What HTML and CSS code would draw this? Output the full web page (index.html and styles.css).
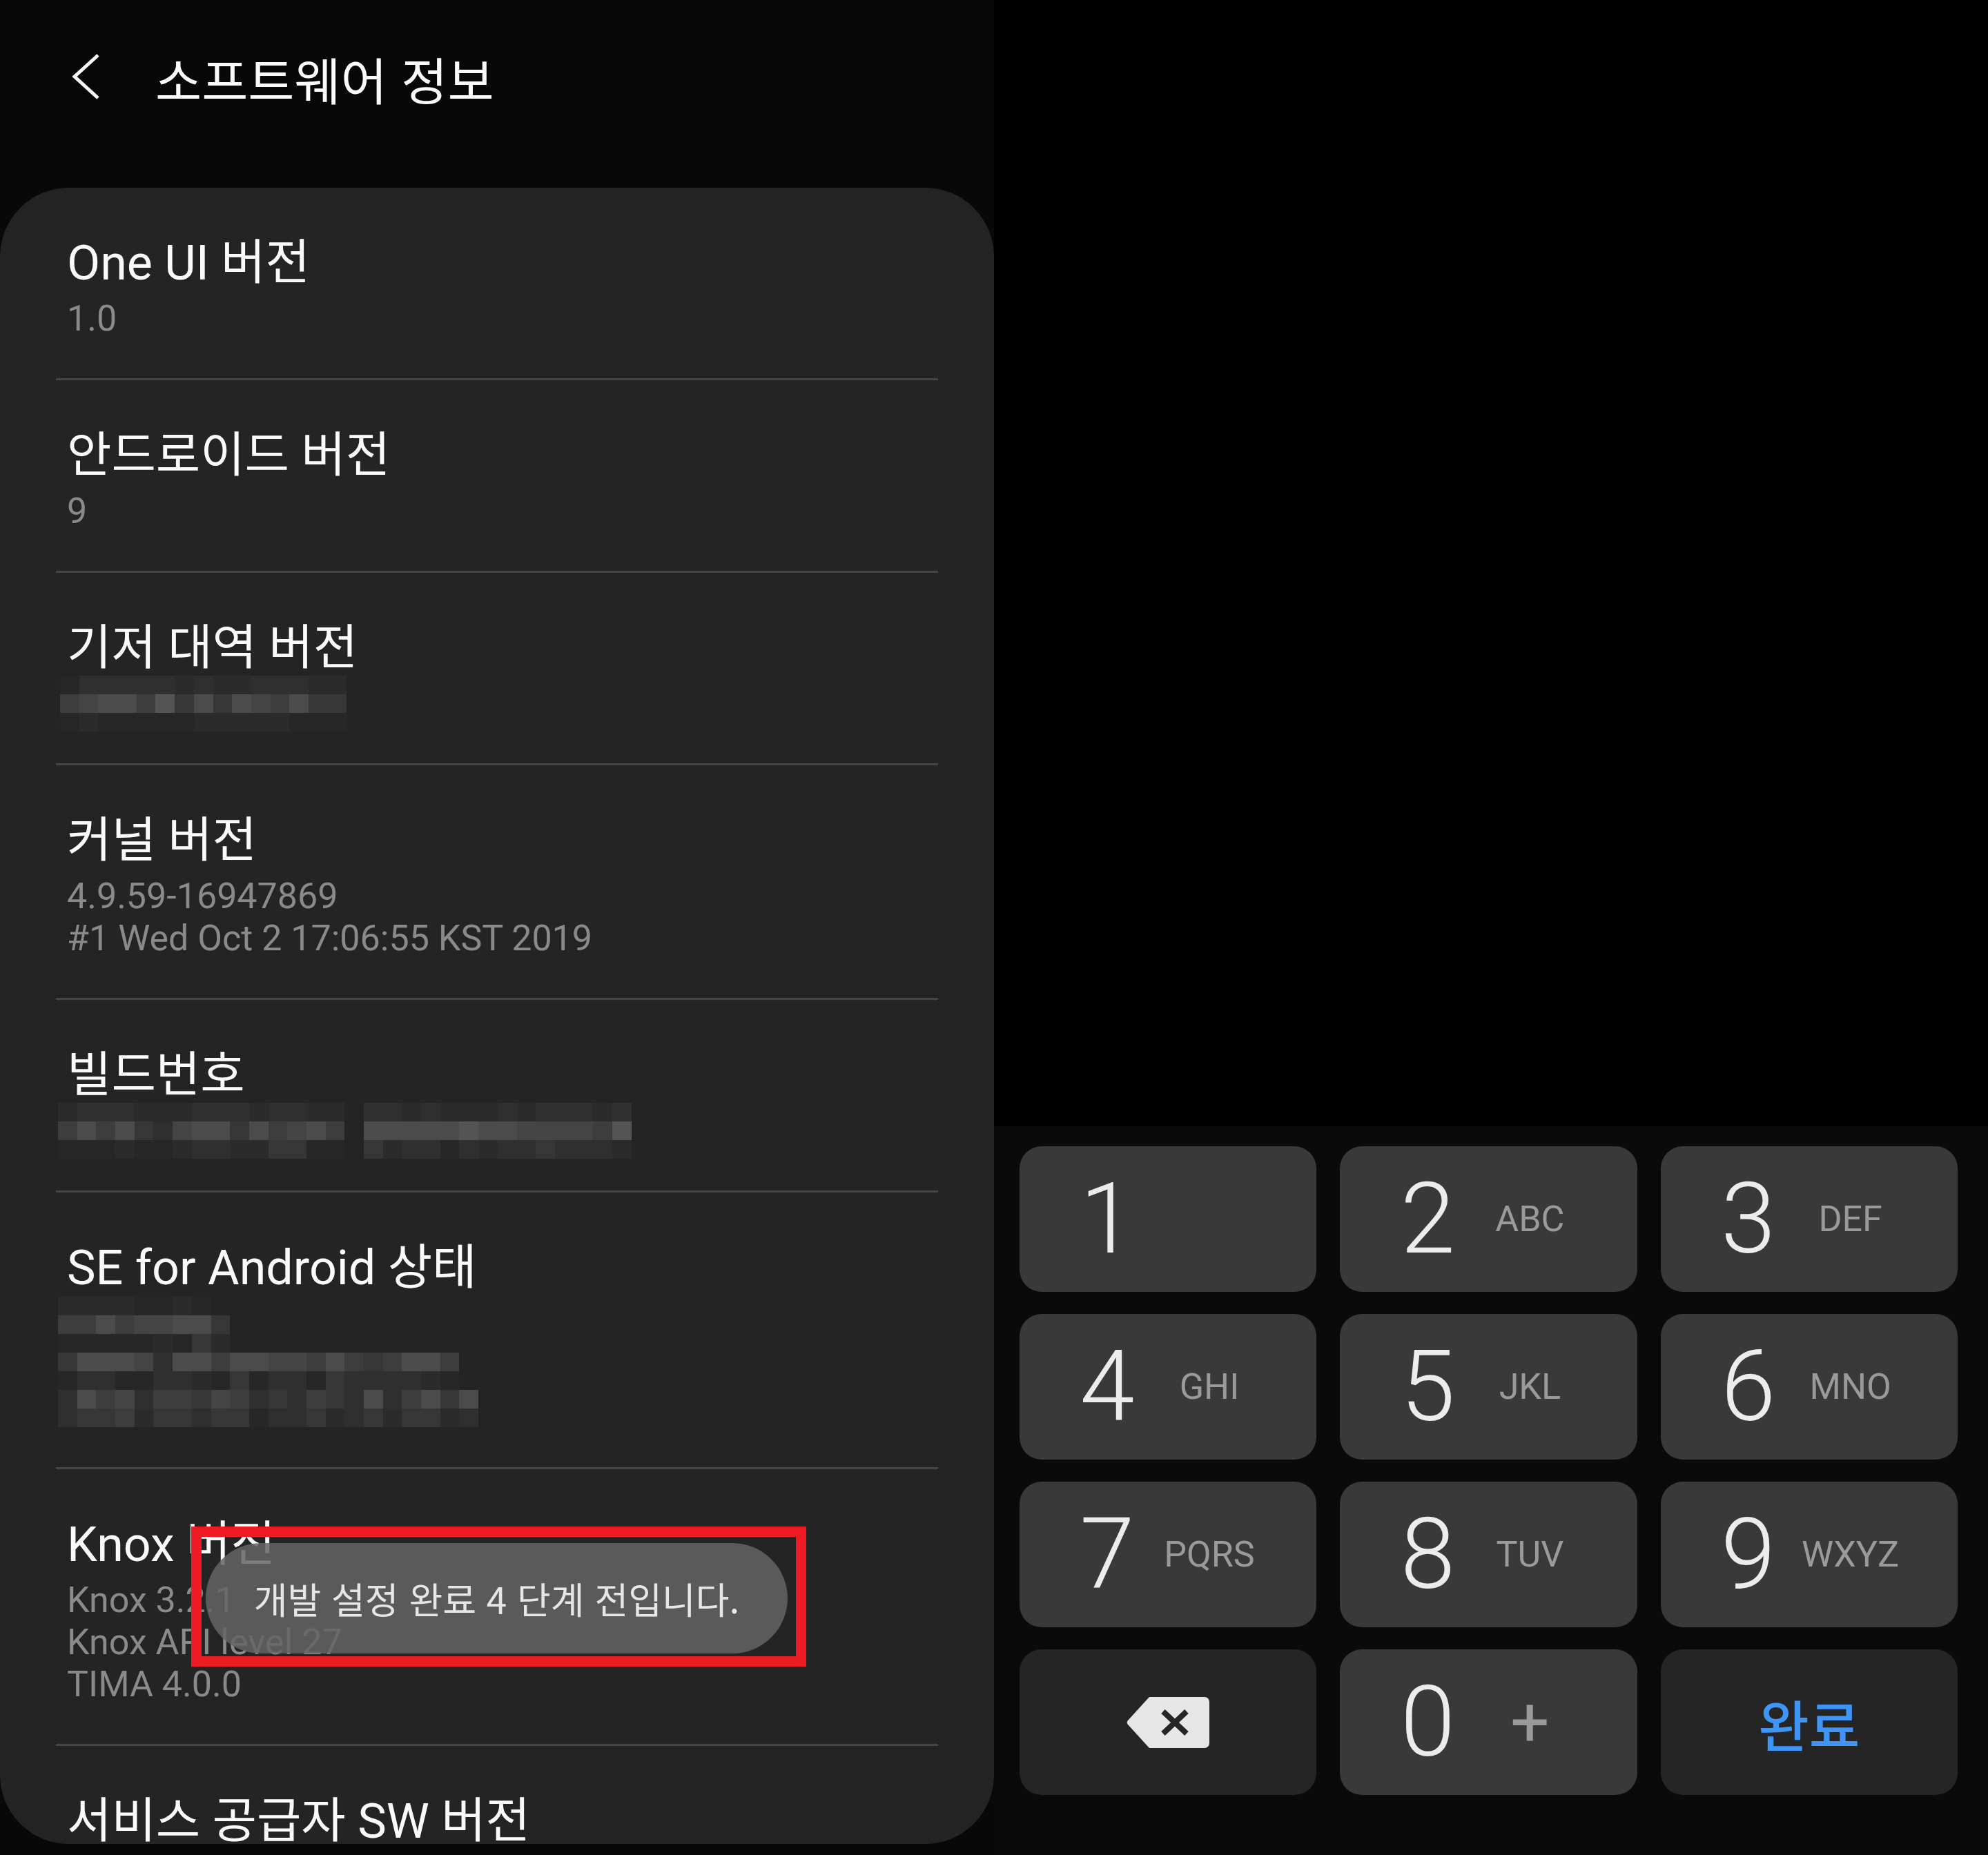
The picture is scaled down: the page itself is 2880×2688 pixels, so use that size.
FILE: index.html
```html
<!DOCTYPE html>
<html lang="ko">
<head>
<meta charset="UTF-8">
<meta name="viewport" content="width=device-width, initial-scale=1.0">
<title>소프트웨어 정보</title>
<link rel="stylesheet" href="styles.css">
</head>
<body>

<div class="settings">
    <!-- Header -->
    <div class="header">
        <svg class="back-icon" width="48" height="72" viewBox="0 0 48 72">
            <polyline points="42,3 8,34 42,65" fill="none" stroke="#fafafa" stroke-width="5" stroke-linejoin="miter"/>
        </svg>
        <h1 class="header-title">소프트웨어 정보</h1>
    </div>

    <!-- Info list -->
    <div class="card">
        <div class="row">
            <div class="row-title">One UI 버전</div>
            <div class="row-sub">1.0</div>
        </div>
        <div class="row">
            <div class="row-title">안드로이드 버전</div>
            <div class="row-sub">9</div>
        </div>
        <div class="row">
            <div class="row-title">기저 대역 버전</div>
            <div class="mosaic" data-rows="022222121122211 456647363654633 010000011111000"></div>
        </div>
        <div class="row">
            <div class="row-title">커널 버전</div>
            <div class="row-sub">4.9.59-16947869<br>#1 Wed Oct 2 17:06:55 KST 2019</div>
        </div>
        <div class="row">
            <div class="row-title">빌드번호</div>
            <div class="mosaic build" data-rows="122211122212211.22121112122212 464632566364564.66666766555547 000100122113300.31220212232221"></div>
        </div>
        <div class="row">
            <div class="row-title">SE for Android 상태</div>
            <div class="mosaic tall" data-rows="11110010 446455663 000001031 366652664665546434664 022002210302203222210 2645244354232432624636 2334133233022312313312"></div>
        </div>
        <div class="row">
            <div class="row-title">Knox 버전</div>
            <div class="row-sub">Knox 3.2.1<br>Knox API level 27<br>TIMA 4.0.0</div>
        </div>
        <div class="row row-last">
            <div class="row-title">서비스 공급자 SW 버전</div>
        </div>
    </div>

    <!-- Toast + highlight box -->
    <div class="toast">개발 설정 완료 4 단계 전입니다.</div>
    <div class="highlight"></div>
</div>

<div class="side">
    <div class="blank"></div>

    <!-- Dial pad -->
    <div class="keypad">
        <div class="key"><span class="digit">1</span></div>
        <div class="key"><span class="digit">2</span><span class="letters">ABC</span></div>
        <div class="key"><span class="digit">3</span><span class="letters">DEF</span></div>
        <div class="key"><span class="digit">4</span><span class="letters">GHI</span></div>
        <div class="key"><span class="digit">5</span><span class="letters">JKL</span></div>
        <div class="key"><span class="digit">6</span><span class="letters">MNO</span></div>
        <div class="key"><span class="digit">7</span><span class="letters">PQRS</span></div>
        <div class="key"><span class="digit">8</span><span class="letters">TUV</span></div>
        <div class="key"><span class="digit">9</span><span class="letters">WXYZ</span></div>
        <div class="key key-dark key-center">
            <svg width="120" height="74" viewBox="0 0 120 74">
                <path d="M33 0 H113 A7 7 0 0 1 120 7 V67 A7 7 0 0 1 113 74 H33 L2 40 A4.5 4.5 0 0 1 2 34 Z" fill="#e6e6e6"/>
                <path d="M53 21 L87 53 M87 21 L53 53" stroke="#262626" stroke-width="8"/>
            </svg>
        </div>
        <div class="key"><span class="digit">0</span><span class="letters plus">+</span></div>
        <div class="key key-dark key-center"><span class="done">완료</span></div>
    </div>
</div>

<script>
    // Build the blurred (mosaic) placeholders from their row strings
    document.querySelectorAll('.mosaic').forEach(function (mosaic) {
        mosaic.dataset.rows.split(' ').forEach(function (line) {
            const row = document.createElement('div');
            row.className = 'mosaic-row';
            for (const ch of line) {
                const cell = document.createElement('i');
                cell.className = ch === '.' ? 'gap' : 'c' + ch;
                row.appendChild(cell);
            }
            mosaic.appendChild(row);
        });
    });
</script>

</body>
</html>
```

FILE: styles.css
```css
/* Base */
body {
    margin: 0;
    width: 2880px;
    height: 2688px;
    overflow: hidden;
    display: flex;
    background-color: #000;
    font-family: Roboto, "Noto Sans CJK KR", sans-serif;
}

/* Left: settings screen */
.settings {
    position: relative;
    width: 1440px;
    background-color: #080808;
}

.header {
    display: flex;
    align-items: center;
    height: 226px;
    margin-bottom: 46px;
    padding-left: 100px;
}

.back-icon {
    display: block;
}

.header-title {
    margin: 0 0 0 77px;
    font-size: 73px;
    font-weight: 400;
    color: #fafafa;
    font-family: "Noto Sans CJK KR", sans-serif;
}

.card {
    height: 2400px;
    box-sizing: border-box;
    background-color: #242424;
    border-radius: 100px;
}

.row {
    margin: 0 81px;
    padding: 69px 16px 56px;
    border-bottom: 3px solid #454545;
}

.row-title {
    font-size: 70px;
    line-height: 80px;
    color: #fafafa;
}

.row-sub {
    margin-top: 10px;
    font-size: 52px;
    line-height: 61px;
    color: #8a8a8a;
}

/* Last row sits right on the card's bottom edge */
.row-last {
    padding: 79px 16px 0;
    border-bottom: none;
}
.row-last .row-title {
    line-height: 60px;
}

/* Mosaic placeholders */
.mosaic {
    margin: 0 0 -10px -10px;
}
.mosaic.build {
    margin-left: -13px;
}
.mosaic.tall {
    margin: 2px 0 2px -13px;
}

.mosaic-row {
    display: flex;
    height: 27px;
}

.mosaic-row i {
    width: 27.7px;
    height: 27px;
}

.c0 { background-color: #272727; }
.c1 { background-color: #2b2b2b; }
.c2 { background-color: #2f2f2f; }
.c3 { background-color: #363636; }
.c4 { background-color: #3d3d3d; }
.c5 { background-color: #444444; }
.c6 { background-color: #4b4b4b; }
.c7 { background-color: #545454; }

/* Toast */
.toast {
    position: absolute;
    left: 298px;
    top: 2236px;
    width: 843px;
    height: 160px;
    border-radius: 80px;
    background-color: rgba(100, 100, 100, 0.85);
    color: #e6e6e6;
    font-family: "Noto Sans CJK KR", sans-serif;
    font-size: 53px;
    line-height: 160px;
    text-align: center;
}

.highlight {
    position: absolute;
    left: 277px;
    top: 2212px;
    width: 891px;
    height: 203px;
    box-sizing: border-box;
    border: 15px solid #ed1c24;
}

/* Right: dialer side */
.side {
    flex: 1;
    display: flex;
    flex-direction: column;
}

.blank {
    height: 1632px;
    background-color: #000;
}

.keypad {
    flex: 1;
    display: grid;
    grid-template-columns: repeat(3, 1fr);
    grid-template-rows: repeat(4, 211px);
    gap: 32px 34px;
    padding: 29px 44px 0 37px;
    background-color: #0a0a0a;
}

.key {
    display: flex;
    align-items: center;
    padding-left: 72px;
    background-color: #393939;
    border-radius: 32px;
}

.key-dark {
    background-color: #252525;
}

.key-center {
    justify-content: center;
    padding-left: 0;
}

.digit {
    width: 110px;
    text-align: center;
    font-size: 143px;
    font-weight: 300;
    line-height: 1;
    color: #ececec;
}

.letters {
    width: 150px;
    margin-left: 18px;
    text-align: center;
    font-size: 52px;
    line-height: 1;
    color: #9a9a9a;
}

.letters.plus {
    font-size: 100px;
}

.done {
    font-family: "Noto Sans CJK KR", sans-serif;
    font-size: 80px;
    font-weight: 500;
    color: #3e95f6;
}
```
